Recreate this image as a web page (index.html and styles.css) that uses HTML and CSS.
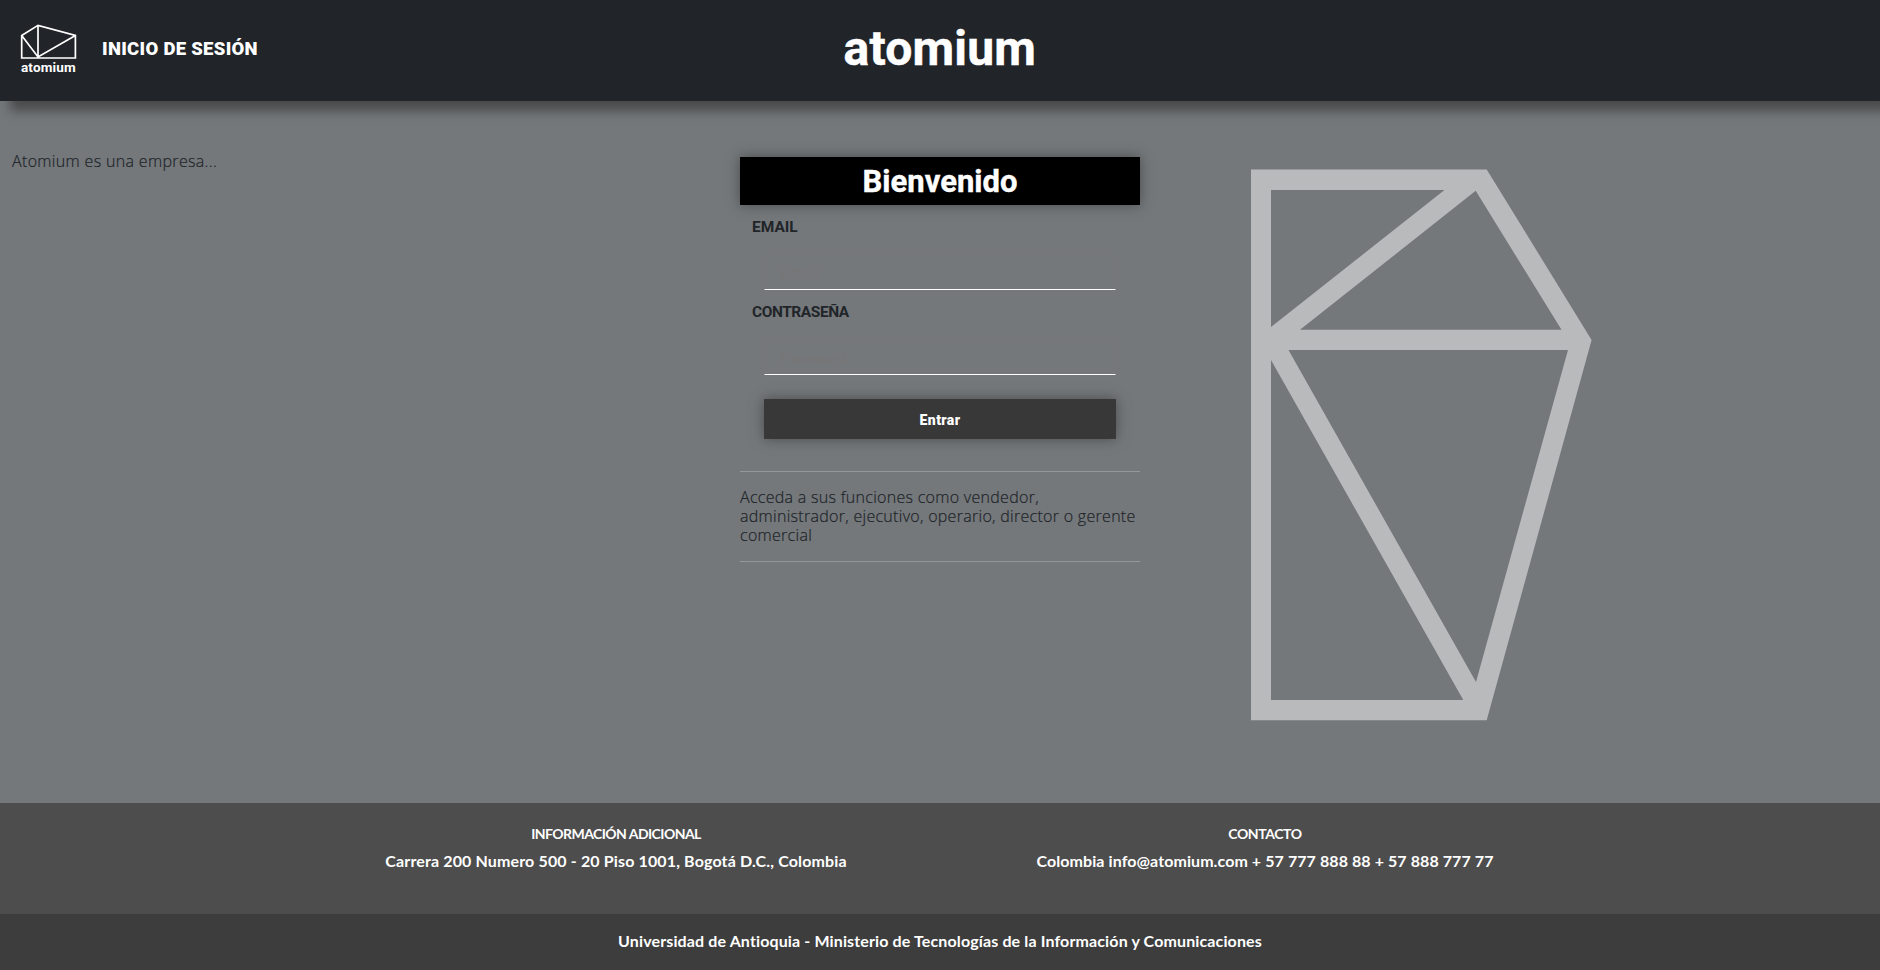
FILE: index.html
```html
<!DOCTYPE html>
<html lang="es">
<head>
<meta charset="utf-8">
<title>Atomium</title>
<link rel="stylesheet" href="styles.css">
</head>
<body>
<header class="header">
  <div class="brand">
    <svg class="brand-mark" viewBox="0 0 58 36" fill="none" stroke="#fff" stroke-width="1.7"><path d="M1.7 11.5 18 1.4 55.4 11.5V34H1.7ZM18 1.4V33M1.7 11.5 18 33 55.4 11.5"/></svg>
    <span class="brand-name">atomium</span>
  </div>
  <a class="login-link">INICIO DE SESIÓN</a>
  <h1 class="site-title"><span>atomium</span></h1>
</header>
<main class="main">
  <p class="about"><span>Atomium es una empresa...</span></p>
  <section class="login">
    <h2 class="welcome"><span>Bienvenido</span></h2>
    <form class="form">
      <label class="label label-email" for="email"><span>EMAIL</span></label>
      <input class="input" id="email" type="email" placeholder="Email">
      <label class="label label-password" for="password"><span>CONTRASEÑA</span></label>
      <input class="input" id="password" type="password" placeholder="Password">
      <button class="submit" type="button">Entrar</button>
    </form>
    <p class="note">Acceda a sus funciones como vendedor, administrador, ejecutivo, operario, director o gerente comercial</p>
  </section>
  <svg class="emblem" viewBox="1251 169 341 552"><path fill="#b9babc" fill-rule="evenodd" d="M1251 169.4H1486.7L1591.6 340 1486.7 720.3H1251ZM1271 190V327L1444.5 190ZM1475.7 190.8 1300 329.8H1561.5ZM1288.5 350 1476 682 1568 350ZM1271 360V700H1463.3Z"/></svg>
</main>
<footer>
  <div class="footer-top">
    <section class="info info-address"><h3>INFORMACIÓN ADICIONAL</h3><p>Carrera 200 Numero 500 - 20 Piso 1001, Bogotá D.C., Colombia</p></section>
    <section class="info info-contact"><h3>CONTACTO</h3><p>Colombia info@atomium.com + 57 777 888 88 + 57 888 777 77</p></section>
  </div>
  <div class="footer-bottom"><span>Universidad de Antioquia - Ministerio de Tecnologías de la Información y Comunicaciones</span></div>
</footer>
</body>
</html>
```
FILE: styles.css
```css
* { box-sizing: border-box; }
body { margin: 0; height: 970px; overflow: hidden; background: #74787b; color: #212529; font-family: Roboto, "Liberation Sans", sans-serif; }
h1, h2, h3, p { margin: 0; }
.header { display: grid; grid-template-columns: 102px 1fr auto 1fr; align-items: center; height: 101px; background: #212529; color: #fff; box-shadow: 10px 10px 10px #4b4b4b; position: relative; }
.brand { width: 58px; margin-left: 20px; padding-bottom: 4px; display: flex; flex-direction: column; }
.brand-mark { width: 58px; height: 36px; display: block; }
.brand-name { font-weight: 700; font-size: 13.5px; line-height: 14px; padding-left: 1px; letter-spacing: .15px; }
.login-link { font-size: 18.5px; font-weight: 900; letter-spacing: .3px; padding-bottom: 3px; }
.site-title { font-size: 48px; line-height: 56px; letter-spacing: .2px; -webkit-text-stroke: .5px #fff; width: 192px; margin-left: -103px; padding-bottom: 3px; }
.main { height: 702px; display: grid; grid-template-columns: 740px 400px 1fr; align-items: start; }
.about { padding: 51px 0 0 12px; font: 300 16px/19px "Open Sans", sans-serif; letter-spacing: .34px; -webkit-text-stroke: .2px #212529; }
.login { padding-top: 56px; }
.welcome { height: 48px; background: #000; color: #fff; text-align: center; font-size: 31px; line-height: 49px; box-shadow: 0 0 12px #4b4b4b; -webkit-text-stroke: .4px #fff; }
.form { display: flex; flex-direction: column; padding: 12px 24px 32px; }
.label { margin-left: -12px; font-size: 15.5px; line-height: 20px; font-weight: 700; }
.label-password { margin-top: 12px; letter-spacing: -.45px; }
.input { height: 35px; margin: 18px 0 0; padding: 0 16px; background: transparent; border: 1px solid #767677; border-bottom-color: #fff; font: 700 14px "Liberation Sans", Arial, sans-serif; }
.input::placeholder { color: #777677; opacity: 1; }
.submit { height: 40px; margin-top: 24px; padding-top: 2px; border: 0; background: #383838; color: #fff; font: 900 14px Roboto, sans-serif; letter-spacing: .4px; box-shadow: 0 0 12px #4b4b4b; }
.note { border: solid #93979a; border-width: 1px 0; padding: 16px 0; font: 300 16px/19px "Open Sans", sans-serif; letter-spacing: .29px; -webkit-text-stroke: .2px #212529; }
.emblem { width: 341px; height: 552px; margin: 68px 0 0 111px; display: block; }
.footer-top { height: 111px; background: #4d4d4d; color: #fff; padding: 21px 290px 0; display: grid; grid-template-columns: 1fr 1fr; text-align: center; font-family: Lato, sans-serif; font-weight: 700; }
.info { white-space: nowrap; }
.info h3 { font-size: 14px; line-height: 20px; letter-spacing: -.55px; }
.info p { font-size: 16px; line-height: 24px; margin-top: 5px; }
.info-address { padding-left: 2px; }
.info-address p { letter-spacing: .14px; }
.info-contact h3 { letter-spacing: -.4px; }
.info-contact p { letter-spacing: .08px; }
.footer-bottom { height: 56px; background: #3d3d3d; color: #fff; text-align: center; font: 700 16px/54px Lato, sans-serif; letter-spacing: .13px; }
```
